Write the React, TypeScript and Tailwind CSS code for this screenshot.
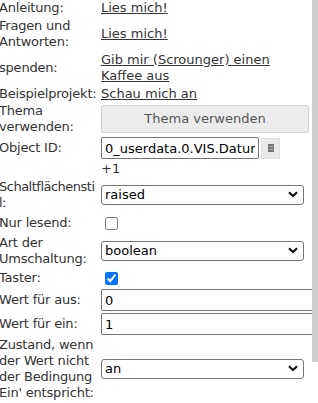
import React from 'react';

const font = { fontFamily: '"DejaVu Sans", Verdana, sans-serif' };

function Row({ h, label, children }: { h: string; label: React.ReactNode; children?: React.ReactNode }) {
  return (
    <div className={`grid grid-cols-[102px_1fr] items-center ${h}`}>
      <div className="leading-4 text-[#333] tracking-[-0.2px] whitespace-nowrap">{label}</div>
      <div className="flex items-center min-w-0">{children}</div>
    </div>
  );
}

function Select({ value }: { value: string }) {
  return (
    <div className="relative w-[203px] h-[20px]">
      <div className="h-full border border-[#767676] rounded-[3px] pl-[3px] leading-[18px] text-black bg-white">{value}</div>
      <svg className="absolute right-[6px] top-[6px]" width="10" height="7" viewBox="0 0 10 7">
        <path d="M1 1.2 L5 5 L9 1.2" fill="none" stroke="#111" strokeWidth="2.2" />
      </svg>
    </div>
  );
}

function TextBox({ value, w }: { value: string; w: string }) {
  return (
    <input
      type="text"
      value={value}
      readOnly
      className={`${w} h-[22px] shrink-0 border border-[#767676] rounded-[2px] px-[3px] text-black bg-white outline-none`}
    />
  );
}

export default function App() {
  return (
    <div className="flex w-[318px] h-[403px] overflow-hidden bg-white text-[13px]" style={font}>
      <div className="w-[312px] overflow-hidden">
        <div className="-ml-[1px] w-[313px] flex flex-col gap-[2px]">
          <Row h="h-[16px]" label="Anleitung:">
            <a className="underline text-[#333] leading-4">Lies mich!</a>
          </Row>
          <Row h="h-[32px]" label={<>Fragen und<br />Antworten:</>}>
            <a className="underline text-[#333] leading-4">Lies mich!</a>
          </Row>
          <Row h="h-[32px]" label="spenden:">
            <a className="underline text-[#333] leading-4">Gib mir (Scrounger) einen<br />Kaffee aus</a>
          </Row>
          <Row h="h-[15px]" label="Beispielprojekt:">
            <a className="underline text-[#333] leading-4">Schau mich an</a>
          </Row>
          <Row h="h-[32px]" label={<>Thema<br />verwenden:</>}>
            <button className="w-[208px] h-[28px] border border-[#d3d3d3] rounded-[2px] bg-[#ececec] text-[#555]">Thema verwenden</button>
          </Row>
          <Row h="h-[22px]" label="Object ID:">
            <TextBox value="0_userdata.0.VIS.Datum" w="w-[158px]" />
            <div className="ml-[2px] w-[19px] h-[21px] bg-[#e9e9e9] border border-[#e0e0e0] flex items-center justify-center">
              <svg width="6" height="8" viewBox="0 0 6 8">
                <rect x="0" y="0" width="6" height="8" fill="#777" />
                <rect x="1" y="2" width="4" height="1" fill="#aaa" />
                <rect x="1" y="5" width="4" height="1" fill="#aaa" />
              </svg>
            </div>
          </Row>
          <Row h="h-[16px]" label="">
            <span className="text-[#333] leading-4">+1</span>
          </Row>
          <Row h="h-[32px]" label={<span className="tracking-[-0.5px]">Schaltflächensti<br />l:</span>}>
            <Select value="raised" />
          </Row>
          <Row h="h-[20px]" label="Nur lesend:">
            <input type="checkbox" className="ml-[4px] w-[13px] h-[13px]" readOnly />
          </Row>
          <Row h="h-[32px]" label={<>Art der<br />Umschaltung:</>}>
            <Select value="boolean" />
          </Row>
          <Row h="h-[18px]" label="Taster:">
            <input type="checkbox" className="ml-[4px] w-[13px] h-[13px] accent-[#0075ff]" checked readOnly />
          </Row>
          <Row h="h-[22px]" label="Wert für aus:">
            <TextBox value="0" w="w-[215px]" />
          </Row>
          <Row h="h-[22px]" label="Wert für ein:">
            <TextBox value="1" w="w-[215px]" />
          </Row>
          <Row h="h-[64px]" label={<>Zustand, wenn<br />der Wert nicht<br />der Bedingung<br />Ein' entspricht:</>}>
            <Select value="an" />
          </Row>
        </div>
      </div>
      <div className="w-[6px] flex flex-col">
        <div className="h-[362px] bg-[#cdcdcd]" />
      </div>
    </div>
  );
}
